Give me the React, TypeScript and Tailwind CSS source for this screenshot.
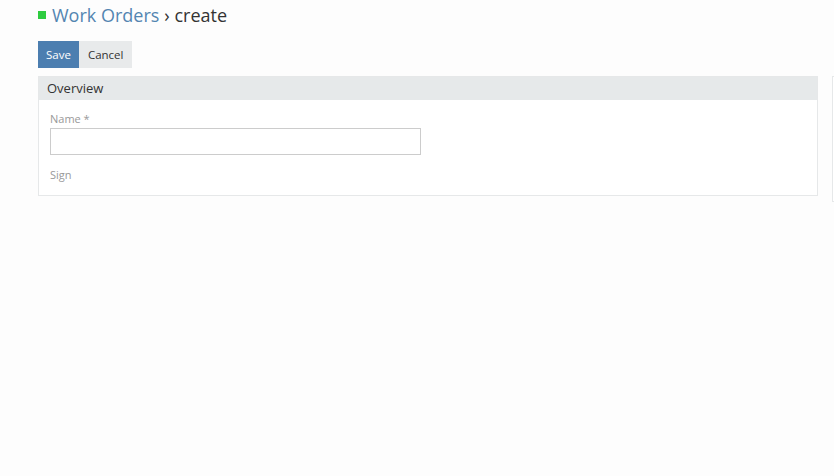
import React from "react";

const App = () => {
  return (
    <div
      className="w-[834px] h-[476px] overflow-hidden bg-[#fdfdfd] text-[#333]"
      style={{ fontFamily: '"Open Sans", sans-serif' }}
    >
      <div className="pl-[38px]">
        {/* Title */}
        <div className="flex items-center h-[30px]">
          <span className="w-[8px] h-[8px] bg-[#2ecc40] mr-[6px]" />
          <span className="text-[18px] text-[#5385b1]">Work Orders</span>
          <span className="text-[18px] text-[#333] ml-[5px]">› create</span>
        </div>

        {/* Actions */}
        <div className="flex mt-[11px]">
          <button className="h-[27px] px-[8px] bg-[#4c7eb0] text-white text-[11.5px]">
            Save
          </button>
          <button className="h-[27px] px-[9px] bg-[#e8eaeb] text-[#333] text-[11.5px]">
            Cancel
          </button>
        </div>

        <div className="flex items-start gap-[14px] mt-[8px]">
          {/* Overview panel */}
          <div className="w-[780px] shrink-0 border border-[#e6e8e9] bg-white">
            <div className="h-[23px] bg-[#e6e9ea] px-[8px] text-[13px] leading-[23px] text-[#333]">
              Overview
            </div>
            <div className="px-[11px] pt-[12px] pb-[13px]">
              <div className="text-[11px] text-[#999] leading-[14px]">Name *</div>
              <input className="mt-[2px] block w-[371px] h-[27px] border border-[#ccc] bg-white outline-none" />
              <div className="mt-[13px] text-[11px] text-[#999] leading-[14px]">Sign</div>
            </div>
          </div>

          {/* Side panel (cut off) */}
          <div className="w-[300px] shrink-0 h-[126px] border border-[#e6e8e9] bg-white" />
        </div>
      </div>
    </div>
  );
};

export default App;
